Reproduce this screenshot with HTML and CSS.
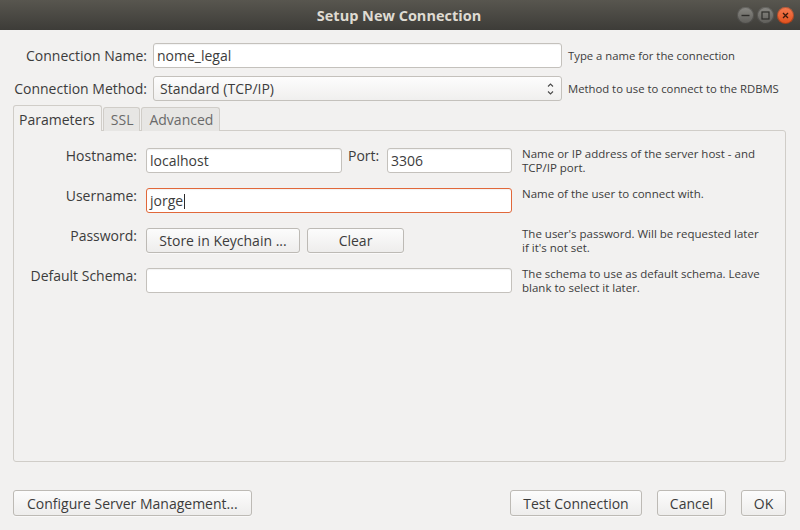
FILE: index.html
```html
<!DOCTYPE html>
<html>

<head>
  <link rel="stylesheet" href="styles.css">
</head>

<body>
  <div class="window">
    <header class="titlebar">
      <span></span>
      <h1 class="title">Setup New Connection</h1>
      <div class="controls">
        <span class="ctl">
          <svg width="17" height="17" viewBox="0 0 17 17"><path d="M4.5 8.5h8" stroke="#2e2d2a" stroke-width="1.4"/></svg>
        </span>
        <span class="ctl">
          <svg width="17" height="17" viewBox="0 0 17 17"><rect x="5" y="5" width="7" height="7" fill="none" stroke="#2e2d2a" stroke-width="1.2"/></svg>
        </span>
        <span class="ctl close">
          <svg width="17" height="17" viewBox="0 0 17 17"><path d="M6 6l5 5M11 6l-5 5" stroke="#3a1a0d" stroke-width="1.3"/></svg>
        </span>
      </div>
    </header>

    <main class="dialog">
      <div class="top-grid">
        <label class="top-label">Connection Name:</label>
        <div class="field">nome_legal</div>
        <span class="top-help">Type a name for the connection</span>

        <label class="top-label">Connection Method:</label>
        <div class="select">
          <span>Standard (TCP/IP)</span>
          <svg width="7" height="14" viewBox="0 0 7 14"><path d="M1 4.5L3.5 2 6 4.5M1 9.5L3.5 12 6 9.5" fill="none" stroke="#4a4a4a" stroke-width="1.1"/></svg>
        </div>
        <span class="top-help">Method to use to connect to the RDBMS</span>
      </div>

      <nav class="tabs">
        <span class="tab active">Parameters</span>
        <span class="tab">SSL</span>
        <span class="tab">Advanced</span>
      </nav>

      <section class="panel">
        <div class="params">
          <label class="param-label">Hostname:</label>
          <div class="host-row">
            <div class="field host">localhost</div>
            <label class="port-label">Port:</label>
            <div class="field port">3306</div>
          </div>
          <p class="help">Name or IP address of the server host - and<br>TCP/IP port.</p>

          <label class="param-label">Username:</label>
          <div class="field focused">jorge<span class="caret"></span></div>
          <p class="help">Name of the user to connect with.</p>

          <label class="param-label">Password:</label>
          <div class="btn-row">
            <button class="btn keychain">Store in Keychain ...</button>
            <button class="btn clear">Clear</button>
          </div>
          <p class="help">The user's password. Will be requested later<br>if it's not set.</p>

          <label class="param-label">Default Schema:</label>
          <div class="field"></div>
          <p class="help">The schema to use as default schema. Leave<br>blank to select it later.</p>
        </div>
      </section>

      <footer class="actions">
        <button class="btn big">Configure Server Management...</button>
        <span class="spacer"></span>
        <button class="btn big test">Test Connection</button>
        <button class="btn big cancel">Cancel</button>
        <button class="btn big ok">OK</button>
      </footer>
    </main>
  </div>
</body>

</html>
```

FILE: styles.css
```css
body {
  margin: 0;
  font-family: 'Open Sans', 'DejaVu Sans', sans-serif;
  font-size: 14px;
  color: #3c3c3c;
  background-color: #f2f1f0;
}

.window {
  width: 800px;
  height: 530px;
  display: flex;
  flex-direction: column;
  overflow: hidden;
}

/* title bar */

.titlebar {
  height: 30px;
  flex-shrink: 0;
  display: grid;
  grid-template-columns: 1fr auto 1fr;
  align-items: center;
  background: linear-gradient(#58564f, #3d3c38);
}

.title {
  margin: 0 0 0 -2px;
  font-size: 14.5px;
  font-weight: 700;
  color: #dfdbd2;
}

.controls {
  justify-self: end;
  display: flex;
  gap: 3px;
  padding-right: 6px;
}

.ctl {
  width: 17px;
  height: 17px;
  border-radius: 50%;
  background: linear-gradient(#8a8984, #5d5c58);
  box-shadow: inset 0 0 0 1px rgba(0, 0, 0, 0.25);
}

.ctl svg {
  display: block;
}

.ctl.close {
  background: linear-gradient(#f57c52, #e2501c);
}

/* dialog body */

.dialog {
  flex: 1;
  padding: 13px 14px 14px 13px;
  display: flex;
  flex-direction: column;
}

.top-grid {
  display: grid;
  grid-template-columns: 134px 409px 1fr;
  column-gap: 6px;
  row-gap: 8px;
  align-items: center;
}

.top-label {
  text-align: right;
  white-space: nowrap;
}

.top-help {
  font-size: 11.3px;
  white-space: nowrap;
}

.field {
  height: 25px;
  box-sizing: border-box;
  padding: 0 3px;
  border: 1px solid #c4c1bc;
  border-radius: 3px;
  background-color: #fff;
  box-shadow: inset 0 1px 1px rgba(0, 0, 0, 0.05);
  line-height: 23px;
  white-space: nowrap;
}

.field.focused {
  border-color: #e1683a;
}

.caret {
  display: inline-block;
  width: 1px;
  height: 15px;
  margin-left: 1px;
  vertical-align: -3px;
  background-color: #2b2b2b;
}

.select {
  height: 25px;
  box-sizing: border-box;
  padding: 0 7px 0 6px;
  border: 1px solid #c4c1bc;
  border-radius: 3px;
  background: linear-gradient(#fdfdfd, #f0efee);
  display: flex;
  align-items: center;
  justify-content: space-between;
}

.select svg {
  display: block;
}

/* tabs */

.tabs {
  display: flex;
  align-items: flex-end;
  height: 26px;
  margin-top: 4px;
  margin-bottom: -1px;
  position: relative;
  z-index: 1;
}

.tab {
  height: 24px;
  box-sizing: border-box;
  padding: 0 6px 0 7px;
  margin-left: 1px;
  border: 1px solid #d0cdc8;
  border-bottom: none;
  border-radius: 3px 3px 0 0;
  background-color: #e7e6e4;
  color: #6a6a6a;
  line-height: 24px;
}

.tab.active {
  height: 26px;
  margin-left: 0;
  padding: 0 6px 0 5px;
  background-color: #f2f1f0;
  color: #3c3c3c;
  line-height: 28px;
}

.panel {
  height: 332px;
  box-sizing: border-box;
  padding-top: 17px;
  border: 1px solid #d0cdc8;
  border-radius: 0 3px 3px 3px;
}

.params {
  display: grid;
  grid-template-columns: 123px 366px 1fr;
  grid-auto-rows: 40px;
  column-gap: 9px;
  align-items: start;
}

.param-label {
  line-height: 16px;
  text-align: right;
  white-space: nowrap;
}

.host-row {
  display: flex;
  align-items: flex-start;
}

.field.host {
  width: 196px;
}

.port-label {
  margin-left: 6px;
  line-height: 16px;
}

.field.port {
  width: 125px;
  margin-left: auto;
}

.help {
  margin: -1px 0 0 1px;
  font-size: 11.5px;
  line-height: 14px;
  white-space: nowrap;
}

.btn-row {
  display: flex;
  gap: 7px;
}

/* buttons */

.btn {
  height: 25px;
  box-sizing: border-box;
  padding: 0 12px;
  border: 1px solid #bdbab5;
  border-radius: 3px;
  background: linear-gradient(#fcfcfc, #eeedec);
  box-shadow: 0 1px 0 rgba(255, 255, 255, 0.6);
  font-family: inherit;
  font-size: 14px;
  color: #3c3c3c;
  white-space: nowrap;
}

.btn.keychain {
  width: 154px;
}

.btn.clear {
  width: 97px;
}

.actions {
  display: flex;
  gap: 15px;
  margin-top: 28px;
}

.btn.big {
  height: 26px;
  padding: 0 13px;
}

.btn.big.test {
  width: 132px;
  padding: 0;
}

.btn.big.cancel {
  width: 69px;
  padding: 0;
}

.btn.big.ok {
  width: 45px;
  padding: 0;
}

.spacer {
  flex: 1;
}
```
